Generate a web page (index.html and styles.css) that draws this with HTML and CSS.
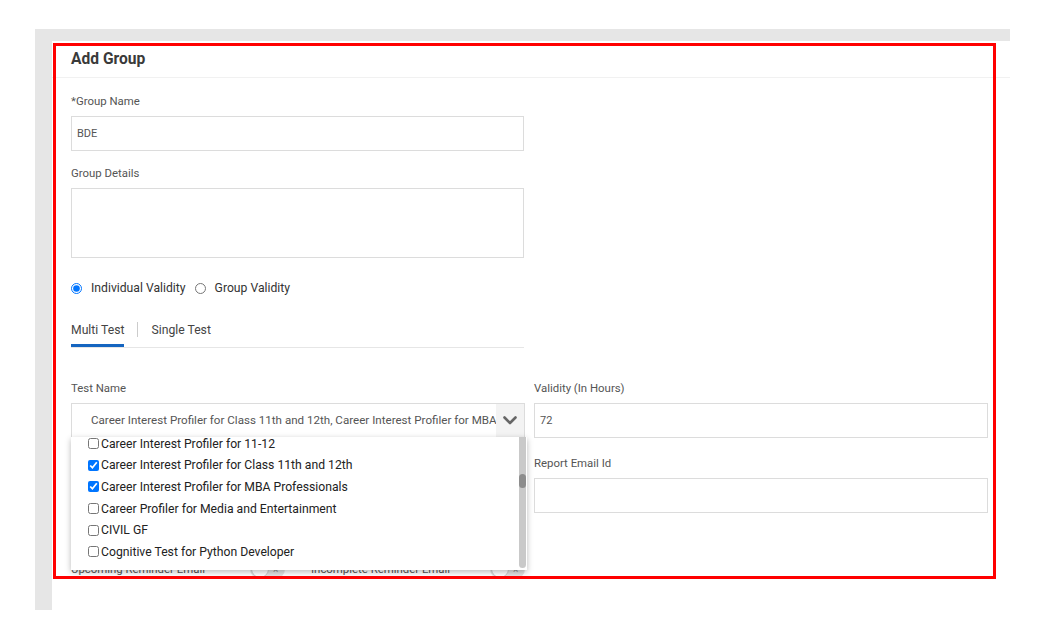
FILE: index.html
```html
<!DOCTYPE html>
<html>
<head>
<meta charset="utf-8">
<link rel="stylesheet" href="styles.css">
</head>
<body>
<div class="frame">
  <div class="card">
    <div class="card-head">Add Group</div>
    <div class="card-body">
      <div class="narrow">
        <div class="field">
          <div class="label">*Group Name</div>
          <div class="input">BDE</div>
        </div>
        <div class="field">
          <div class="label">Group Details</div>
          <div class="input textarea"></div>
        </div>
        <div class="radios">
          <label class="radio"><input type="radio" name="v" checked><span>Individual Validity</span></label>
          <label class="radio"><input type="radio" name="v"><span>Group Validity</span></label>
        </div>
        <div class="tabs">
          <span class="tab active">Multi Test</span>
          <span class="tab-sep"></span>
          <span class="tab">Single Test</span>
        </div>
      </div>
      <div class="grid">
        <div class="field">
          <div class="label">Test Name</div>
          <div class="select-wrap">
            <div class="select">
              <span class="select-text">Career Interest Profiler for Class 11th and 12th, Career Interest Profiler for MBA Professionals</span>
              <span class="select-arrow">
                <svg width="14" height="9" viewBox="0 0 14 9"><path d="M1.5 1.5 L7 7 L12.5 1.5" fill="none" stroke="#666" stroke-width="2.6" stroke-linecap="round" stroke-linejoin="round"/></svg>
              </span>
            </div>
            <div class="dropdown">
              <ul class="options">
                <li><input type="checkbox"><span>Career Interest Profiler for 11-12</span></li>
                <li><input type="checkbox" checked><span>Career Interest Profiler for Class 11th and 12th</span></li>
                <li><input type="checkbox" checked><span>Career Interest Profiler for MBA Professionals</span></li>
                <li><input type="checkbox"><span>Career Profiler for Media and Entertainment</span></li>
                <li><input type="checkbox"><span>CIVIL GF</span></li>
                <li><input type="checkbox"><span>Cognitive Test for Python Developer</span></li>
              </ul>
              <div class="scrollbar"><div class="thumb"></div></div>
            </div>
          </div>
        </div>
        <div class="field">
          <div class="label">Validity (In Hours)</div>
          <div class="input">72</div>
        </div>
        <div class="field">
          <div class="label label-empty"></div>
          <div class="input"></div>
        </div>
        <div class="field">
          <div class="label">Report Email Id</div>
          <div class="input"></div>
        </div>
      </div>
      <div class="toggles">
        <div class="toggle-group"><span>Upcoming Reminder Email</span><span class="toggle"><span class="knob"></span><span class="x">×</span></span></div>
        <div class="toggle-group"><span>Incomplete Reminder Email</span><span class="toggle"><span class="knob"></span><span class="x">×</span></span></div>
      </div>
    </div>
  </div>
  <div class="red-frame"></div>
</div>
</body>
</html>
```
FILE: styles.css
```css
* { box-sizing: border-box; }
html, body { margin: 0; padding: 0; background: #fff; }
body { font-family: Roboto, "Liberation Sans", sans-serif; color: #555; }

.frame {
  position: relative;
  margin: 29px 0 0 35px;
  width: 975px;
  height: 581px;
  border-top: 12px solid #e6e6e6;
  border-left: 17px solid #e6e6e6;
  background: #fff;
}

.card {
  height: 536px;
  overflow: hidden;
}

.card-head {
  height: 37px;
  padding-left: 19px;
  border-bottom: 1px solid #f1f1f1;
  font-size: 15.6px;
  font-weight: 700;
  color: #3a3a3a;
  line-height: 36px;
}

.card-body {
  padding: 16px 0 0 19px;
}

.narrow { width: 453px; }

.field { margin-bottom: 15px; }
.label {
  font-size: 11.4px;
  line-height: 14px;
  color: #555;
  margin-bottom: 8px;
}
.label-empty { height: 14px; }
.input {
  height: 35px;
  border: 1px solid #dcdcdc;
  font-size: 11px;
  line-height: 33px;
  padding-left: 5px;
  color: #555;
  background: #fff;
}
.textarea { height: 70px; }

.radios {
  display: flex;
  align-items: center;
  margin-top: 22px;
  height: 16px;
  font-size: 12.2px;
  color: #333;
}
.radio { display: flex; align-items: center; margin-right: 9px; }
.radio input {
  width: 11px; height: 11px; margin: 0 9px 0 0;
}

.tabs {
  display: flex;
  align-items: flex-end;
  margin-top: 26px;
  border-bottom: 1px solid #e6e6e6;
  font-size: 12.2px;
  color: #444;
}
.tab {
  line-height: 16px;
  padding-bottom: 6px;
  border-bottom: 3px solid transparent;
}
.tab.active { border-bottom-color: #1565c0; }
.tab-sep {
  width: 1px;
  height: 15px;
  background: #ccc;
  margin: 0 13px 10px 13px;
}

.grid {
  display: grid;
  grid-template-columns: 454px 454px;
  column-gap: 9px;
  row-gap: 0;
  margin-top: 33px;
}
.grid .field { margin-bottom: 18px; }

.select-wrap { position: relative; }
.select {
  display: flex;
  height: 35px;
  border: 1px solid #dcdcdc;
  background: #fff;
}
.select-text {
  flex: 1;
  overflow: hidden;
  white-space: nowrap;
  font-size: 11.6px;
  line-height: 33px;
  padding-left: 19px;
  color: #555;
}
.select-arrow {
  width: 28px;
  background: #f3f3f3;
  display: flex;
  align-items: center;
  justify-content: center;
}

.dropdown {
  position: absolute;
  left: 0;
  top: 34px;
  width: 456px;
  height: 133px;
  background: #fff;
  box-shadow: 0 2px 6px rgba(0,0,0,0.28);
  overflow: hidden;
  z-index: 2;
}
.options {
  list-style: none;
  margin: -4px 0 0 0;
  padding: 0;
}
.options li {
  display: flex;
  align-items: center;
  height: 21.6px;
  padding-left: 17px;
  font-size: 12.2px;
  color: #222;
}
.options input {
  width: 11px;
  height: 11px;
  margin: 0 2px 0 0;
}
.scrollbar {
  position: absolute;
  right: 1px;
  top: 0;
  bottom: 2px;
  width: 7px;
  background: #c9c9c9;
  border-radius: 0 0 4px 4px;
}
.thumb {
  position: absolute;
  left: 0;
  top: 37px;
  width: 7px;
  height: 14px;
  border-radius: 4px;
  background: #8d8d8d;
}

.toggles {
  display: flex;
  gap: 26px;
  margin-top: 28px;
  font-size: 11.4px;
  color: #555;
}
.toggle-group {
  width: 214px;
  display: flex;
  justify-content: space-between;
  align-items: center;
}
.toggle {
  position: relative;
  width: 35px;
  height: 20px;
  border-radius: 10px;
  background: #e2e2e2;
  display: flex;
  align-items: center;
}
.knob {
  width: 18px;
  height: 18px;
  margin-left: 1px;
  border-radius: 50%;
  background: #fff;
  border: 1px solid #ccc;
}
.x {
  font-size: 10px;
  color: #888;
  margin-left: 4px;
}

.red-frame {
  position: absolute;
  left: 1px;
  top: 2px;
  width: 943px;
  height: 536px;
  border: 3px solid #ff0000;
  pointer-events: none;
}
```
